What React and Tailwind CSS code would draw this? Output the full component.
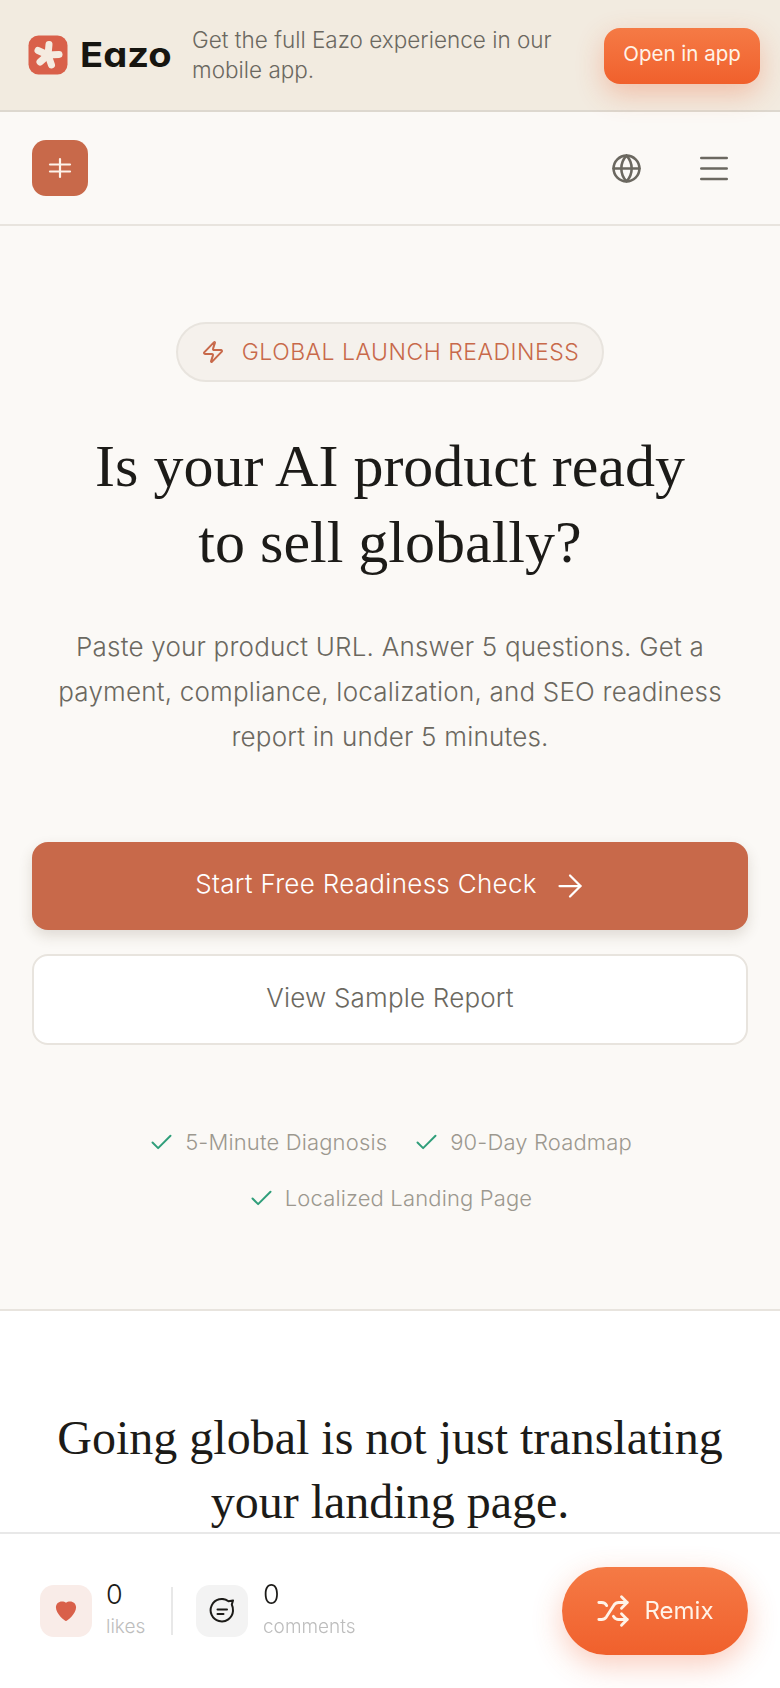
import React from "react";
import { Globe, Zap, ArrowRight, Check, Shuffle } from "lucide-react";

const sans = "font-['Inter',sans-serif] font-light";
const serif = "font-['Liberation_Serif','Times_New_Roman',serif]";

function LogoMark() {
  return (
    <svg width="40" height="40" viewBox="0 0 40 40" className="shrink-0">
      <rect x="0.5" y="0.5" width="39" height="39" rx="10" fill="#d9604a" />
      <g stroke="#f5ebe0" strokeWidth="7" strokeLinecap="round">
        <path d="M20 20 L21 9.5" />
        <path d="M20 20 L31 19.5" />
        <path d="M20 20 L23.5 30" />
        <path d="M20 20 L12 27" />
        <path d="M20 20 L10 15.5" />
      </g>
    </svg>
  );
}

function Feature({ children }) {
  return (
    <div className="flex items-center gap-[10px]">
      <Check size={27} strokeWidth={1.75} className="text-[#2f9e7a]" />
      <span className="text-[22px] leading-[32px] tracking-[0.15px] text-[#9c988f]">{children}</span>
    </div>
  );
}

export default function App() {
  return (
    <div className={`${sans} relative h-[1688px] overflow-hidden bg-white`}>
      <header className="relative z-10 flex h-[112px] items-center border-b-2 border-[#ddd8cf] bg-[#f2ebe0] pl-[28px] pr-[20px]">
        <LogoMark />
        <span className="ml-[12px] inline-block w-[100px] origin-left scale-x-[1.12] text-[34px] font-bold leading-none text-[#171510] [font-feature-settings:'cv11']">Eazo</span>
        <p className="ml-[12px] w-[380px] text-[22.5px] leading-[30px] text-[#6b6860]">Get the full Eazo experience in our mobile app.</p>
        <button className="ml-auto mt-[1px] h-[56px] w-[156px] rounded-[16px] bg-gradient-to-b from-[#f57a45] to-[#f0602c] pb-[2px] text-[20.5px] font-normal text-[#fff3e8] shadow-[0_10px_28px_rgba(240,90,40,0.3)]">Open in app</button>
      </header>

      <nav className="flex h-[114px] items-center justify-between border-b-2 border-[#e8e4de] bg-[#fbf9f6] pl-[32px] pr-[52px]">
        <div className="flex h-[56px] w-[56px] items-center justify-center rounded-[14px] bg-[#c8694a]">
          <svg width="24" height="24" viewBox="0 0 24 24" fill="none" stroke="#fdf3ea" strokeWidth="2.2" strokeLinecap="round">
            <path d="M12 3V21" />
            <path d="M2 8.5H22" />
            <path d="M2 15.5H22" />
          </svg>
        </div>
        <div className="flex items-center gap-[58px]">
          <Globe size={31} strokeWidth={2} className="text-[#6b6860]" />
          <svg width="28" height="25" viewBox="0 0 28 25" fill="none" stroke="#6b6860" strokeWidth="2.6" strokeLinecap="round">
            <path d="M1.3 2H26.7" />
            <path d="M1.3 12.5H26.7" />
            <path d="M1.3 23H26.7" />
          </svg>
        </div>
      </nav>

      <section className="flex h-[1085px] flex-col items-center border-b-2 border-[#e8e4de] bg-[#fbf9f6] px-[32px] pt-[96px]">
        <div className="flex h-[60px] w-[428px] items-center justify-center gap-[17px] rounded-full border-2 border-[#e8e4de] bg-[#f5f1ec]">
          <Zap size={24} strokeWidth={2} className="text-[#c8694a]" />
          <span className="text-[23px] tracking-[0.5px] text-[#c8694a]">GLOBAL LAUNCH READINESS</span>
        </div>
        <h1 className={`${serif} mt-[46px] text-center text-[60px] font-normal leading-[76px] text-[#1c1b18]`}>
          Is your AI product ready<br />to sell globally?
        </h1>
        <p className="mt-[44px] w-[716px] text-center text-[26px] leading-[45px] tracking-[0.2px] text-[#6b6860]">
          Paste your product URL. Answer 5 questions. Get a payment, compliance, localization, and SEO readiness report in under 5 minutes.
        </p>
        <button className="mt-[83px] flex h-[88px] w-full shrink-0 items-center justify-center gap-[15px] rounded-[16px] bg-[#c8694a] pl-[3px] text-[26px] tracking-[0.3px] text-white shadow-[0_6px_14px_rgba(80,60,40,0.16)]">
          <span className="mb-[5px]">Start Free Readiness Check</span>
          <ArrowRight size={36} strokeWidth={1.5} />
        </button>
        <button className="mt-[24px] h-[91px] w-full shrink-0 rounded-[16px] border-2 border-[#e8e4de] bg-white pb-[5px] text-[26px] tracking-[0.2px] text-[#6b6860]">
          View Sample Report
        </button>
        <div className="mt-[81px] flex w-full flex-wrap justify-center gap-x-[26px] gap-y-[24px] px-[60px]">
          <Feature>5-Minute Diagnosis</Feature>
          <Feature>90-Day Roadmap</Feature>
          <Feature>Localized Landing Page</Feature>
        </div>
      </section>

      <section className="flex justify-center bg-white pt-[95px]">
        <h2 className={`${serif} text-center text-[48px] font-normal leading-[64px] text-[#1c1b18]`}>
          Going global is not just translating<br />your landing page.
        </h2>
      </section>

      <footer className="fixed inset-x-0 bottom-0 z-20 flex h-[156px] items-center border-t-2 border-[#e8e8e8] bg-white pl-[40px] pr-[32px]">
        <div className="flex h-[52px] w-[52px] items-center justify-center rounded-[14px] bg-[#f9ece8]">
          <svg width="22" height="22" viewBox="0 0 24 24" fill="#d9604a">
            <path d="M12 23 C10.8 23 1 15.5 1 8 C1 4 4 1.5 7.5 1.5 C9.3 1.5 11 2 12 3 C13 2 14.7 1.5 16.5 1.5 C20 1.5 23 4 23 8 C23 15.5 13.2 23 12 23 Z" />
          </svg>
        </div>
        <div className="ml-[14px] flex w-[40px] flex-col">
          <span className="text-[27px] leading-[32px] text-[#1c1b18]">0</span>
          <span className="text-[19px] leading-[32px] text-[#bdbdbd]">likes</span>
        </div>
        <div className="ml-[25px] h-[48px] w-[2px] bg-[#e8e8e8]" />
        <div className="ml-[23px] flex h-[52px] w-[52px] items-center justify-center rounded-[14px] bg-[#f3f3f3]">
          <svg width="26" height="26" viewBox="0 0 26 26" fill="none" stroke="#1c1b18" strokeWidth="2" strokeLinecap="round" strokeLinejoin="round">
            <path d="M24 2.5 L19.5 3.2 A11.2 11.2 0 1 0 24 13 C24 10 23.3 7.5 22.8 6.5 Z" />
            <path d="M8.5 11.5 H18" />
            <path d="M8.5 16 H14.5" />
          </svg>
        </div>
        <div className="ml-[15px] flex flex-col">
          <span className="text-[27px] leading-[32px] text-[#1c1b18]">0</span>
          <span className="text-[19px] leading-[32px] text-[#bdbdbd]">comments</span>
        </div>
        <button className="ml-auto flex h-[88px] w-[186px] items-center justify-center gap-[14px] rounded-full bg-gradient-to-b from-[#f57a45] to-[#f0602c] text-[24px] font-normal text-[#fff3e8] shadow-[0_10px_30px_rgba(240,90,40,0.3)]">
          <Shuffle size={34} strokeWidth={2} />
          Remix
        </button>
      </footer>
    </div>
  );
}
